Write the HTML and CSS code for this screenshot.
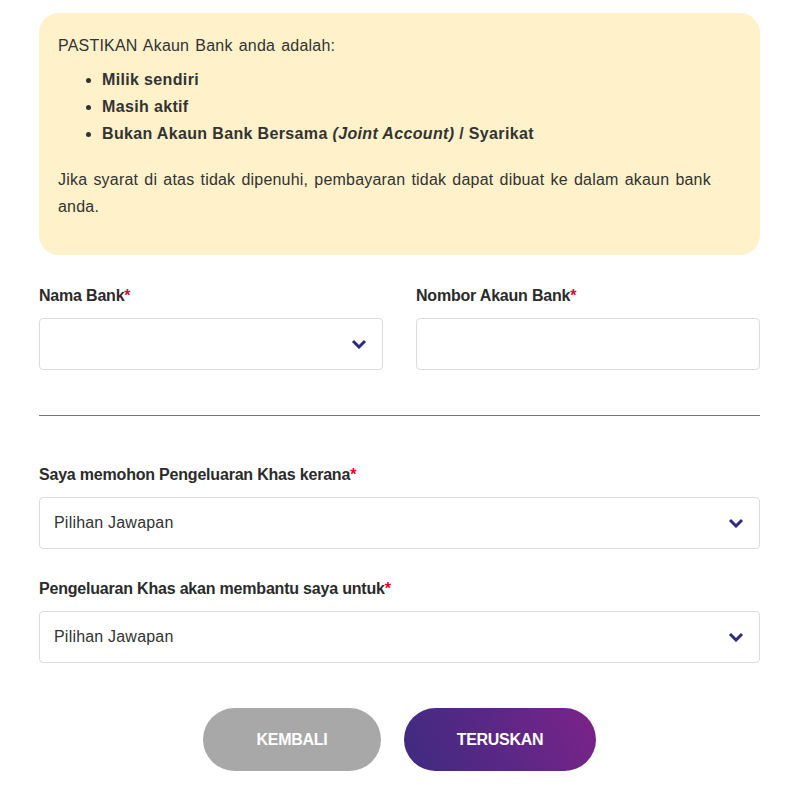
FILE: index.html
```html
<!DOCTYPE html>
<html>
<head>
<meta charset="utf-8">
<link rel="stylesheet" href="styles.css">
</head>
<body>
<div class="page">
  <div class="notice">
    <p class="intro">PASTIKAN Akaun Bank anda adalah:</p>
    <ul class="rules">
      <li>Milik sendiri</li>
      <li>Masih aktif</li>
      <li>Bukan Akaun Bank Bersama <em>(Joint Account)</em> / Syarikat</li>
    </ul>
    <p class="warn">Jika syarat di atas tidak dipenuhi, pembayaran tidak dapat dibuat ke dalam akaun bank anda.</p>
  </div>

  <div class="row">
    <div class="field">
      <label class="label">Nama Bank<span class="req">*</span></label>
      <div class="control select">
        <span class="value"></span>
        <svg class="chev" width="16" height="10" viewBox="0 0 16 10"><path d="M2 2 L8 8 L14 2" fill="none" stroke="#2d2a7f" stroke-width="3"/></svg>
      </div>
    </div>
    <div class="field">
      <label class="label">Nombor Akaun Bank<span class="req">*</span></label>
      <div class="control"></div>
    </div>
  </div>

  <hr class="divider">

  <div class="field wide first">
    <label class="label">Saya memohon Pengeluaran Khas kerana<span class="req">*</span></label>
    <div class="control select">
      <span class="value">Pilihan Jawapan</span>
      <svg class="chev" width="16" height="10" viewBox="0 0 16 10"><path d="M2 2 L8 8 L14 2" fill="none" stroke="#2d2a7f" stroke-width="3"/></svg>
    </div>
  </div>

  <div class="field wide second">
    <label class="label">Pengeluaran Khas akan membantu saya untuk<span class="req">*</span></label>
    <div class="control select">
      <span class="value">Pilihan Jawapan</span>
      <svg class="chev" width="16" height="10" viewBox="0 0 16 10"><path d="M2 2 L8 8 L14 2" fill="none" stroke="#2d2a7f" stroke-width="3"/></svg>
    </div>
  </div>

  <div class="actions">
    <button class="btn back">KEMBALI</button>
    <button class="btn next">TERUSKAN</button>
  </div>
</div>
</body>
</html>
```

FILE: styles.css
```css
html, body {
  margin: 0;
  padding: 0;
  background: #fff;
}
body {
  font-family: "Liberation Sans", Arial, sans-serif;
  color: #333;
}
.page {
  width: 721px;
  margin-left: 39px;
  padding-top: 13px;
}
.notice {
  background: #fff1c9;
  border-radius: 20px;
  padding: 19px 19px 35px 19px;
  font-size: 16px;
  line-height: 27px;
  letter-spacing: 0.2px;
  word-spacing: 1.5px;
}
.intro {
  margin: 0 0 7px 0;
}
.rules {
  margin: 0 0 19px 0;
  padding-left: 44px;
  font-weight: bold;
  letter-spacing: 0.35px;
  word-spacing: 0;
}
.rules em {
  font-style: italic;
}
.warn {
  margin: 0;
}
.row {
  display: flex;
  gap: 33px;
  margin-top: 30px;
}
.row .field {
  flex: 1;
}
.label {
  display: block;
  font-weight: bold;
  font-size: 16px;
  line-height: 22px;
  margin-bottom: 11px;
  color: #2b2b2b;
  letter-spacing: -0.2px;
}
.req {
  color: #e4002b;
}
.control {
  height: 50px;
  border: 1px solid #dcdcdc;
  border-radius: 4px;
  display: flex;
  align-items: center;
  justify-content: space-between;
  padding: 0 15px 0 14px;
  box-sizing: content-box;
}
.control .value {
  font-size: 16px;
  color: #333;
  letter-spacing: 0.2px;
}
.chev {
  display: block;
}
.divider {
  border: 0;
  border-top: 1px solid #777;
  height: 0;
  margin: 45px 0 0 0;
}
.field.first {
  margin-top: 48px;
}
.field.second {
  margin-top: 29px;
}
.actions {
  display: flex;
  justify-content: center;
  gap: 23px;
  margin-top: 45px;
}
.btn {
  height: 63px;
  border: 0;
  border-radius: 32px;
  color: #fff;
  font-family: "Liberation Sans", Arial, sans-serif;
  font-weight: bold;
  font-size: 16px;
  letter-spacing: -0.3px;
}
.back {
  width: 178px;
  background: #a8a8a8;
}
.next {
  width: 192px;
  background: linear-gradient(65deg, #3d2b7e 0%, #5e2786 55%, #7c2389 100%);
}
```
